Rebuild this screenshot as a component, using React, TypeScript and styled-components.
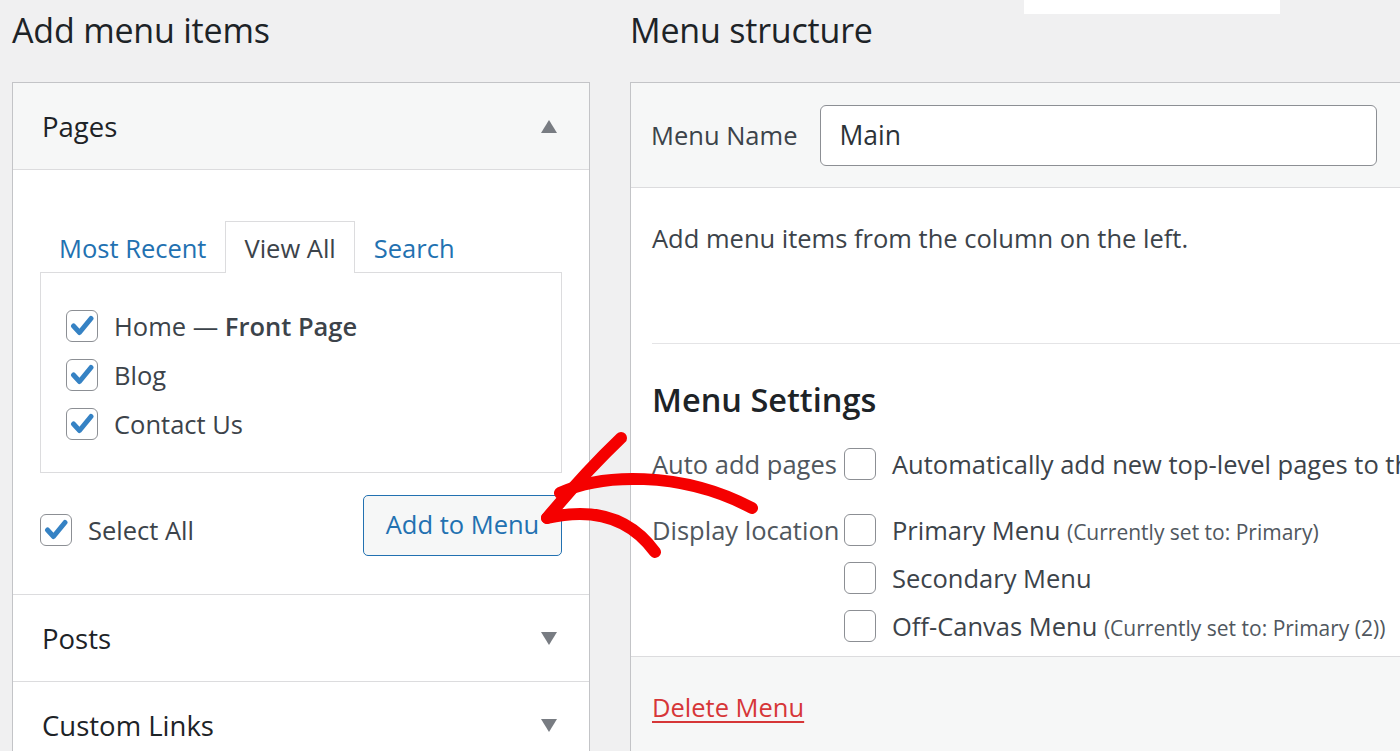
import styled, { createGlobalStyle } from 'styled-components'

const GlobalStyle = createGlobalStyle`
  body {
    margin: 0;
    background: #f0f0f1;
    font-family: "Open Sans", "Noto Sans", sans-serif;
    color: #3c434a;
    overflow: hidden;
  }
`

const Page = styled.div`
  position: relative;
  display: grid;
  grid-template-columns: 578px 820px;
  column-gap: 40px;
  padding-left: 12px;
  width: 1400px;
  height: 751px;
  overflow: hidden;
  box-sizing: border-box;
`

const Notice = styled.div`
  position: absolute;
  top: 0;
  left: 1024px;
  width: 256px;
  height: 14px;
  background: #fff;
`

const Column = styled.div`
  display: flex;
  flex-direction: column;
  min-width: 0;
`

const Title = styled.h2`
  margin: 0;
  height: 82px;
  line-height: 60px;
  font-size: 34px;
  font-weight: 400;
  color: #1d2327;
  letter-spacing: -0.2px;
`

const Box = styled.div`
  border: 1px solid #c3c4c7;
  background: #fff;
`

const SectionHead = styled.div<{ $open?: boolean }>`
  display: flex;
  align-items: center;
  justify-content: space-between;
  height: 86px;
  padding: 0 32px 0 29px;
  background: ${({ $open }) => ($open ? '#f6f7f7' : '#fff')};
  border-top: ${({ $open }) => ($open ? 'none' : '1px solid #dcdcde')};
  font-size: 27.5px;
  color: #1d2327;
`

const Caret = styled.span<{ $up?: boolean }>`
  width: 0;
  height: 0;
  border-left: 8px solid transparent;
  border-right: 8px solid transparent;
  ${({ $up }) =>
    $up ? 'border-bottom: 13px solid #787c82;' : 'border-top: 13px solid #787c82;'}
`

const SectionBody = styled.div`
  border-top: 1px solid #dcdcde;
  padding: 51px 27px 38px 27px;
`

const Tabs = styled.div`
  display: flex;
  height: 51px;
`

const Tab = styled.div<{ $active?: boolean }>`
  display: flex;
  align-items: center;
  padding: 0 18px;
  font-size: 25.5px;
  color: ${({ $active }) => ($active ? '#3c434a' : '#2271b1')};
  background: ${({ $active }) => ($active ? '#fff' : 'transparent')};
  border: 1px solid ${({ $active }) => ($active ? '#dcdcde' : 'transparent')};
  border-bottom: none;
  margin-bottom: -1px;
  position: relative;
  z-index: 1;
`

const TabPanel = styled.div`
  height: 201px;
  box-sizing: border-box;
  border: 1px solid #dcdcde;
  padding: 28px 0 0 25px;
`

const CheckRow = styled.label<{ $h?: number }>`
  display: flex;
  align-items: center;
  gap: 16px;
  height: ${({ $h }) => $h ?? 49}px;
  font-size: 25.5px;
  color: #3c434a;
  white-space: nowrap;
`

const Strong = styled.strong`
  font-weight: 600;
`

const BoxMark = styled.span`
  flex: none;
  width: 32px;
  height: 32px;
  box-sizing: border-box;
  border: 1px solid #8c8f94;
  border-radius: 6px;
  background: #fff;
  display: flex;
  align-items: center;
  justify-content: center;
`

const Actions = styled.div`
  display: flex;
  align-items: center;
  justify-content: space-between;
  margin-top: 22px;
  height: 61px;
`

const SelectAll = styled(CheckRow)`
  margin-top: 9px;
`

const Button = styled.button`
  width: 199px;
  height: 61px;
  border: 1px solid #2271b1;
  border-radius: 5px;
  background: #f6f7f7;
  color: #2271b1;
  font-family: inherit;
  font-size: 25.5px;
  padding: 0 0 4px;
`

const MenuHead = styled.div`
  display: flex;
  align-items: center;
  gap: 23px;
  height: 104px;
  padding-left: 20px;
  background: #f6f7f7;
  border-bottom: 1px solid #dcdcde;
  font-size: 25.5px;
`

const NameInput = styled.div`
  width: 557px;
  height: 61px;
  box-sizing: border-box;
  border: 1px solid #8c8f94;
  border-radius: 6px;
  background: #fff;
  display: flex;
  align-items: center;
  padding-left: 18px;
  font-size: 26.5px;
  color: #2c3338;
`

const MenuBody = styled.div`
  height: 468px;
  overflow: hidden;
  padding-left: 21px;
`

const Intro = styled.p`
  margin: 32px 0 0;
  line-height: 36px;
  font-size: 25.5px;
`

const Rule = styled.hr`
  margin: 87px 0 0;
  border: none;
  border-top: 1px solid #e4e4e6;
`

const SubTitle = styled.h3`
  margin: 36px 0 0;
  line-height: 40px;
  font-size: 32.5px;
  font-weight: 600;
  color: #1d2327;
`

const Settings = styled.div`
  display: grid;
  grid-template-columns: 192px 1fr;
  margin-top: 20px;
  font-size: 25.5px;
`

const SettingLabel = styled.div<{ $top?: number }>`
  line-height: 48px;
  margin-top: ${({ $top }) => $top ?? 0}px;
  white-space: nowrap;
  color: #50575e;
`

const Options = styled.div<{ $top?: number }>`
  margin-top: ${({ $top }) => $top ?? 0}px;
  white-space: nowrap;
`

const Note = styled.span`
  font-size: 21px;
  color: #50575e;
`

const Footer = styled.div`
  border-top: 1px solid #dcdcde;
  background: #f6f7f7;
  height: 120px;
  padding: 32px 0 0 21px;
`

const DeleteLink = styled.a`
  font-size: 25.5px;
  line-height: 36px;
  color: #d63638;
  text-decoration: underline;
  text-underline-offset: 4px;
`

const Annotation = styled.svg`
  position: absolute;
  left: 0;
  top: 0;
  pointer-events: none;
`

const Check = ({ on }: { on?: boolean }) => (
  <BoxMark>
    {on && (
      <svg width="24" height="22" viewBox="0 0 24 22">
        <path d="M3.5 11 L9.5 17.5 L21 3.5" fill="none" stroke="#3582c4" strokeWidth="5" strokeLinecap="round" strokeLinejoin="round" />
      </svg>
    )}
  </BoxMark>
)

const pages = [
  { label: 'Home', extra: 'Front Page' },
  { label: 'Blog' },
  { label: 'Contact Us' },
]

const locations = [
  { label: 'Primary Menu', note: '(Currently set to: Primary)' },
  { label: 'Secondary Menu' },
  { label: 'Off-Canvas Menu', note: '(Currently set to: Primary (2))' },
  { label: '' },
]

const App = () => {
  return (
    <Page>
      <GlobalStyle />
      <Notice />
      <Column>
        <Title>Add menu items</Title>
        <Box>
          <SectionHead $open>
            Pages
            <Caret $up />
          </SectionHead>
          <SectionBody>
            <Tabs>
              <Tab>Most Recent</Tab>
              <Tab $active>View All</Tab>
              <Tab>Search</Tab>
            </Tabs>
            <TabPanel>
              {pages.map((p) => (
                <CheckRow key={p.label}>
                  <Check on />
                  <span>
                    {p.label}
                    {p.extra && (
                      <>
                        {' '}&mdash; <Strong>{p.extra}</Strong>
                      </>
                    )}
                  </span>
                </CheckRow>
              ))}
            </TabPanel>
            <Actions>
              <SelectAll>
                <Check on />
                Select All
              </SelectAll>
              <Button>Add to Menu</Button>
            </Actions>
          </SectionBody>
          <SectionHead>
            Posts
            <Caret />
          </SectionHead>
          <SectionHead>
            Custom Links
            <Caret />
          </SectionHead>
        </Box>
      </Column>
      <Column>
        <Title>Menu structure</Title>
        <Box>
          <MenuHead>
            Menu Name
            <NameInput>Main</NameInput>
          </MenuHead>
          <MenuBody>
            <Intro>Add menu items from the column on the left.</Intro>
            <Rule />
            <SubTitle>Menu Settings</SubTitle>
            <Settings>
              <SettingLabel>Auto add pages</SettingLabel>
              <Options>
                <CheckRow $h={48}>
                  <Check />
                  Automatically add new top-level pages to this menu
                </CheckRow>
              </Options>
              <SettingLabel $top={18}>Display location</SettingLabel>
              <Options $top={18}>
                {locations.map((l, i) => (
                  <CheckRow key={i} $h={48}>
                    <Check />
                    {l.label && (
                      <span>
                        {l.label} {l.note && <Note>{l.note}</Note>}
                      </span>
                    )}
                  </CheckRow>
                ))}
              </Options>
            </Settings>
          </MenuBody>
          <Footer>
            <DeleteLink>Delete Menu</DeleteLink>
          </Footer>
        </Box>
      </Column>
      <Annotation width="1400" height="751" viewBox="0 0 1400 751">
        <g fill="none" stroke="#f50000" strokeWidth="12" strokeLinecap="round" strokeLinejoin="round">
          <path d="M621 438 C600 458 572 488 547 518" />
          <path d="M560 493 C600 474 680 470 752 508" />
          <path d="M547 518 C590 508 628 515 655 552" />
        </g>
      </Annotation>
    </Page>
  )
}

export default App
